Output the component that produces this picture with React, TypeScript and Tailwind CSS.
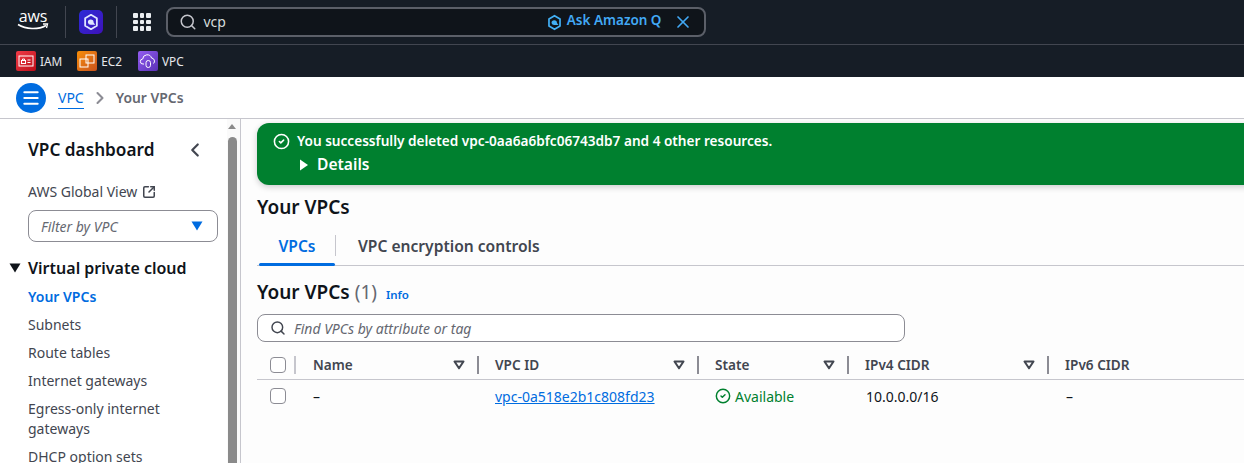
import { ChevronLeft, ChevronRight, Menu, Search, X, SquareArrowOutUpRight, CircleCheck } from "lucide-react";

const font = "font-['Noto_Sans',sans-serif]";

function Caret({ className }: { className: string }) {
  return (
    <svg viewBox="0 0 12 10" className={className}>
      <path d="M0.500 0.500h11L6 9.500z" fill="currentColor" />
    </svg>
  );
}

function SortIcon() {
  return (
    <svg viewBox="0 0 12 10" className="w-[12px] h-[10px] text-[#424650]">
      <path d="M1.500 1.500h9L6 8.300z" fill="none" stroke="currentColor" strokeWidth="2" strokeLinejoin="round" />
    </svg>
  );
}

function ServiceIcon({ color, children }: { color: string; children: React.ReactNode }) {
  return (
    <div className={`w-5 h-5 rounded-[2px] flex items-center justify-center ${color}`}>
      <svg viewBox="0 0 20 20" className="w-5 h-5" fill="none" stroke="white" strokeWidth="1">
        {children}
      </svg>
    </div>
  );
}

function HexQ({ className, stroke }: { className: string; stroke: string }) {
  return (
    <svg viewBox="0 0 20 20" className={className} fill="none">
      <path d="M10 2l6.500 3.800v8.400L10 18l-6.500-3.800V5.800z" stroke={stroke} strokeWidth="2" strokeLinejoin="round" />
      <path d="M6.500 10.500a3.200 3.200 0 1 1 6.400 0l1.800 2.500h-5a3.200 3.200 0 0 1-3.200-2.500z" fill={stroke} />
    </svg>
  );
}

function TopBar() {
  return (
    <div className="h-[45px] bg-[#161d26] border-b border-[#424650] flex items-center pl-[17px]">
      <div className="w-[32px] flex flex-col items-center text-white leading-none">
        <span className="font-['Open_Sans',sans-serif] text-[16px] leading-[13px] tracking-[-0.2px] -mt-[3px]">aws</span>
        <svg viewBox="0 0 32 8" className="w-[32px] h-[8px]" fill="none">
          <path d="M1 1.500c8 5 20 5.500 28 1" stroke="white" strokeWidth="1.500" />
          <path d="M26 1h4.500l-1 4" stroke="white" strokeWidth="1.300" />
        </svg>
      </div>
      <div className="w-px h-[32px] bg-[#424650] ml-[16px]" />
      <div className="ml-[13px] w-6 h-6 rounded-[5px] bg-gradient-to-br from-[#2a2ad8] to-[#3d10b8] flex items-center justify-center">
        <HexQ className="w-[18px] h-[18px]" stroke="#dfe6ff" />
      </div>
      <div className="w-px h-[32px] bg-[#424650] ml-[13px]" />
      <div className="ml-[16px] grid grid-cols-3 gap-[2px]">
        {Array.from({ length: 9 }).map((_, i) => (
          <div key={i} className="w-[4.500px] h-[4.500px] rounded-[1px] bg-[#eceff2]" />
        ))}
      </div>
      <div className="ml-[15px] w-[540px] h-[30px] rounded-[8px] border-2 border-[#5b5f68] bg-[#0f141a] flex items-center pl-[11px] pr-[11px]">
        <Search size={18} strokeWidth={2} className="text-[#c6c6cd]" />
        <span className="ml-[7px] text-[14px] -mt-[2px] text-[#d5dbdb]">vcp</span>
        <HexQ className="ml-auto w-[17px] h-[17px]" stroke="#42b0f5" />
        <span className="ml-[4px] text-[13.500px] -mt-[3px] font-semibold text-[#42a9f5]">Ask Amazon Q</span>
        <X size={20} strokeWidth={2} className="ml-[11px] text-[#42a9f5]" />
      </div>
    </div>
  );
}

function Favorites() {
  return (
    <div className="h-[32px] bg-[#161d26] flex items-center pl-[16px] text-[11.800px] text-[#e6e8ec]">
      <ServiceIcon color="bg-gradient-to-br from-[#f03a47] to-[#bd0816]">
        <rect x="3" y="5" width="14" height="10" />
        <rect x="5.500" y="9.500" width="4" height="3" />
        <path d="M6.500 9.500V8h2v1.500M11.500 9h3M11.500 11.500h3" />
      </ServiceIcon>
      <span className="ml-[4px] mt-[1px]">IAM</span>
      <div className="ml-[15px]">
        <ServiceIcon color="bg-gradient-to-br from-[#f78e04] to-[#c8511b]">
          <rect x="3" y="8" width="8" height="8" />
          <rect x="9" y="4" width="8" height="8" />
        </ServiceIcon>
      </div>
      <span className="ml-[4px] mt-[1px]">EC2</span>
      <div className="ml-[16px]">
        <ServiceIcon color="bg-gradient-to-br from-[#945df2] to-[#5a30b5]">
          <path d="M6 13H5a2.500 2.500 0 0 1-.3-5 4.500 4.500 0 0 1 8.800-1 3.200 3.200 0 0 1 2 5.500" />
          <rect x="8" y="9.500" width="4.500" height="7" rx="2.200" />
        </ServiceIcon>
      </div>
      <span className="ml-[4px] mt-[1px]">VPC</span>
    </div>
  );
}

function Breadcrumbs() {
  return (
    <div className="h-[42px] bg-white border-b border-[#c6c6cd] flex items-center pl-[16px]">
      <div className="w-[30px] h-[30px] rounded-full bg-[#006ce0] flex items-center justify-center">
        <Menu size={20} strokeWidth={2.400} className="text-white" />
      </div>
      <span className="ml-[12px] mt-[1px] text-[14px] leading-[20px] text-[#006ce0] border-b border-[#006ce0]">VPC</span>
      <ChevronRight size={20} strokeWidth={2.500} className="ml-[6px] text-[#8c8c94]" />
      <span className="ml-[6px] mt-[1px] text-[13.900px] font-semibold text-[#656871]">Your VPCs</span>
    </div>
  );
}

const navItems = ["Subnets", "Route tables", "Internet gateways", "Egress-only internet gateways", "DHCP option sets"];

function Sidebar() {
  return (
    <aside className="w-[241px] shrink-0 flex border-r border-[#c6c6cd] bg-white overflow-hidden">
      <div className="w-[227px] shrink-0 pl-[28px] pr-[9px]">
        <div className="mt-[18px] flex items-center justify-between pr-[12px]">
          <span className="text-[17.200px] leading-[26px] font-semibold text-[#0f141a]">VPC dashboard</span>
          <ChevronLeft size={22} strokeWidth={2.400} className="text-[#424650]" />
        </div>
        <div className="mt-[19px] flex items-center text-[14px] leading-[20px] text-[#424650]">
          AWS Global View
          <SquareArrowOutUpRight size={14} strokeWidth={2.600} className="ml-[5px] text-[#424650]" />
        </div>
        <div className="mt-[8px] w-[190px] h-[32px] rounded-[8px] border border-[#8c8c94] flex items-center pl-[12px] pr-[14px]">
          <span className="text-[14px] italic text-[#656871]">Filter by VPC</span>
          <Caret className="ml-auto w-[12px] h-[10px] text-[#006ce0]" />
        </div>
        <div className="mt-[14px] -ml-[19px] flex items-center">
          <Caret className="w-[12px] h-[10px] text-[#0f141a]" />
          <span className="ml-[7px] text-[16px] leading-[24px] font-semibold text-[#0f141a]">Virtual private cloud</span>
        </div>
        <div className="mt-[7px] text-[14px] leading-[20px] font-semibold text-[#006ce0]">Your VPCs</div>
        {navItems.map((item) => (
          <div key={item} className="mt-[8px] text-[14px] leading-[20px] text-[#424650]">
            {item}
          </div>
        ))}
      </div>
      <div className="w-[13px] shrink-0 flex flex-col items-center bg-[#fafafa] pr-[3px]">
        <div className="mt-[5px] w-0 h-0 border-x-[4px] border-x-transparent border-b-[5px] border-b-[#8a8a8a]" />
        <div className="mt-[8px] w-[9px] flex-1 rounded-t-[5px] bg-[#8a8a8a]" />
      </div>
    </aside>
  );
}

const columns = [
  { label: "Name", sort: true },
  { label: "VPC ID", sort: true },
  { label: "State", sort: true },
  { label: "IPv4 CIDR", sort: true },
  { label: "IPv6 CIDR", sort: false },
];

const gridCols = "grid grid-cols-[39px_183px_220px_150px_200px_1fr]";

function Checkbox() {
  return <div className="w-[16px] h-[16px] rounded-[4px] border-[1.500px] border-[#8c8c94] bg-white" />;
}

function VpcTable() {
  return (
    <div className="mt-[9px] -mr-[17px]">
      <div className={`${gridCols} h-[29px] border-b border-[#c6c6cd] items-center`}>
        <div className="h-[18px] pl-[13px] flex items-center justify-between border-r-2 border-[#c6c6cd]">
          <Checkbox />
        </div>
        {columns.map((col, i) => (
          <div
            key={col.label}
            className={`h-[18px] pr-[12px] flex items-center justify-between text-[13.600px] font-semibold text-[#424650] ${i === 0 ? "pl-[17px]" : "pl-[16px]"} ${col.sort ? "border-r-2 border-[#8c8c94]" : ""}`}
          >
            <span>{col.label}</span>
            {col.sort && <SortIcon />}
          </div>
        ))}
      </div>
      <div className={`${gridCols} h-[32px] items-center text-[14px] text-[#0f141a]`}>
        <div className="pl-[13px]">
          <Checkbox />
        </div>
        <div className="pl-[17px]">–</div>
        <div className="pl-[16px]">
          <span className="text-[#006ce0] underline">vpc-0a518e2b1c808fd23</span>
        </div>
        <div className="pl-[16px] flex items-center text-[#00802f]">
          <CircleCheck size={16} strokeWidth={2.200} />
          <span className="ml-[4px]">Available</span>
        </div>
        <div className="pl-[17px]">10.0.0.0/16</div>
        <div className="pl-[17px]">–</div>
      </div>
    </div>
  );
}

function MainContent() {
  return (
    <main className="flex-1 min-w-0 bg-[#fdfdfd] pl-[16px] overflow-hidden">
      <div className="mt-[4px] h-[62px] -mr-[20px] rounded-l-[12px] bg-[#00802f] shadow-[0_2px_6px_rgba(0,7,22,0.2)] pl-[16px] pt-[8px] text-white">
        <div className="flex items-center h-[20px]">
          <CircleCheck size={17} strokeWidth={2.200} />
          <span className="ml-[7px] text-[13.620px] font-semibold">You successfully deleted vpc-0aa6a6bfc06743db7 and 4 other resources.</span>
        </div>
        <div className="flex items-center h-[24px] mt-[2px] pl-[26px]">
          <svg viewBox="0 0 10 12" className="w-[10px] h-[12px]">
            <path d="M1 0.500l8 5.500-8 5.500z" fill="white" />
          </svg>
          <span className="ml-[8px] text-[15.600px] font-semibold">Details</span>
        </div>
      </div>
      <h1 className="mt-[8px] text-[19px] leading-[28px] font-semibold text-[#0f141a]">Your VPCs</h1>
      <div className="mt-[10px] h-[35px] flex border-b border-[#c6c6cd] relative">
        <div className="w-[78px] flex justify-center pt-[4px] pl-[2px] text-[15.600px] leading-[22px] font-semibold text-[#006ce0] relative">
          VPCs
          <div className="absolute left-[2px] right-0 -bottom-[1px] h-[3px] rounded-[2px] bg-[#006ce0]" />
        </div>
        <div className="w-px h-[21px] mt-[4px] bg-[#c6c6cd]" />
        <div className="pl-[22px] pt-[4px] text-[15.600px] leading-[22px] font-semibold text-[#424650]">VPC encryption controls</div>
      </div>
      <div className="mt-[12px] flex items-center h-[28px]">
        <span className="text-[19px] font-semibold text-[#0f141a]">Your VPCs</span>
        <span className="ml-[5px] text-[19px] text-[#656871]">(1)</span>
        <span className="ml-[9px] mt-[5px] text-[11.500px] font-semibold text-[#006ce0]">Info</span>
      </div>
      <div className="mt-[8px] w-[648px] h-[28px] rounded-[8px] border border-[#8c8c94] bg-white flex items-center pl-[12px]">
        <Search size={16} strokeWidth={2.200} className="text-[#424650]" />
        <span className="ml-[8px] text-[14px] italic text-[#656871]">Find VPCs by attribute or tag</span>
      </div>
      <VpcTable />
    </main>
  );
}

export default function App() {
  return (
    <div className={`${font} w-[1244px] h-[463px] overflow-hidden flex flex-col bg-white`}>
      <TopBar />
      <Favorites />
      <Breadcrumbs />
      <div className="flex-1 min-h-0 flex">
        <Sidebar />
        <MainContent />
      </div>
    </div>
  );
}
